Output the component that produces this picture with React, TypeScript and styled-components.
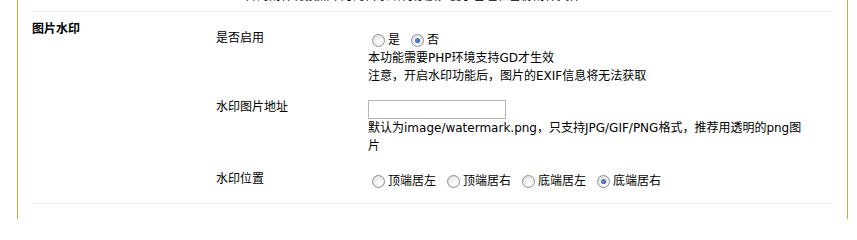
import React from "react";
import styled, { createGlobalStyle } from "styled-components";

const GlobalStyle = createGlobalStyle`
  html, body {
    margin: 0;
    padding: 0;
    background: #ffffff;
  }
  body {
    font-family: "DejaVu Sans", "Noto Sans CJK SC", sans-serif;
    font-size: 12px;
    color: #000000;
  }
`;

const Panel = styled.div`
  margin-left: 17px;
  width: 831px;
  box-sizing: border-box;
  min-height: 219px;
  border-left: 1px solid #e39c3c;
  border-right: 1px solid #e39c3c;
  padding: 0 14px;
  overflow: hidden;
`;

const PrevTail = styled.div`
  height: 2px;
  overflow: hidden;
  display: flex;
  align-items: flex-end;
  padding-left: 201px;
  margin-bottom: 9px;
  line-height: 12px;
  white-space: nowrap;
  color: #000;
`;

const Section = styled.div`
  display: grid;
  grid-template-columns: 184px 1fr;
  border-top: 1px solid #eeeeee;
  border-bottom: 1px solid #eeeeee;
  padding: 10px 0 5px;
`;

const SectionTitle = styled.div`
  font-weight: bold;
  line-height: 14px;
`;

const Fields = styled.div`
  display: flex;
  flex-direction: column;
`;

const FieldRow = styled.div`
  display: grid;
  grid-template-columns: 152px 1fr;
  padding: 9px 0 8px;
  &:first-child {
    padding-bottom: 6px;
  }
`;

const FieldLabel = styled.div`
  line-height: 14px;
`;

const FieldValue = styled.div`
  line-height: 18px;
  width: 440px;
`;

const RadioGroup = styled.div`
  display: flex;
  align-items: center;
  height: 18px;
`;

const Option = styled.label`
  display: inline-flex;
  align-items: center;
  margin-right: 7px;
  white-space: nowrap;
`;

const Radio = styled.span<{ $checked?: boolean }>`
  position: relative;
  display: inline-block;
  width: 13px;
  height: 13px;
  box-sizing: border-box;
  margin: 0 3px 0 4px;
  border-radius: 50%;
  border: 1px solid #8c9097;
  background: radial-gradient(circle at 60% 65%, #ffffff 0%, #f1f1f1 45%, #d4d4d4 100%);
  &::after {
    content: "";
    display: ${(p) => (p.$checked ? "block" : "none")};
    position: absolute;
    left: 3px;
    top: 3px;
    width: 5px;
    height: 5px;
    border-radius: 50%;
    background: radial-gradient(circle at 40% 40%, #6f93d8 0%, #2f58ad 70%, #24478f 100%);
  }
`;

const TextInput = styled.input`
  display: block;
  width: 138px;
  height: 19px;
  box-sizing: border-box;
  margin: 0;
  padding: 1px 3px;
  border: 1px solid #b5b5b5;
  background: #ffffff;
  font: inherit;
`;

const Line = styled.div``;

type Opt = { label: string; checked?: boolean };

const Radios: React.FC<{ options: Opt[] }> = ({ options }) => (
  <RadioGroup>
    {options.map((o) => (
      <Option key={o.label}>
        <Radio $checked={o.checked} />
        {o.label}
      </Option>
    ))}
  </RadioGroup>
);

export default function App() {
  return (
    <>
      <GlobalStyle />
      <Panel>
        <PrevTail>上传的附件将按照年月的目录结构存放，便于管理和备份附件文件</PrevTail>
        <Section>
          <SectionTitle>图片水印</SectionTitle>
          <Fields>
            <FieldRow>
              <FieldLabel>是否启用</FieldLabel>
              <FieldValue>
                <Radios options={[{ label: "是" }, { label: "否", checked: true }]} />
                <Line>本功能需要PHP环境支持GD才生效</Line>
                <Line>注意，开启水印功能后，图片的EXIF信息将无法获取</Line>
              </FieldValue>
            </FieldRow>
            <FieldRow>
              <FieldLabel>水印图片地址</FieldLabel>
              <FieldValue>
                <TextInput type="text" defaultValue="" />
                <Line>默认为image/watermark.png，只支持JPG/GIF/PNG格式，推荐用透明的png图片</Line>
              </FieldValue>
            </FieldRow>
            <FieldRow>
              <FieldLabel>水印位置</FieldLabel>
              <FieldValue>
                <Radios
                  options={[
                    { label: "顶端居左" },
                    { label: "顶端居右" },
                    { label: "底端居左" },
                    { label: "底端居右", checked: true },
                  ]}
                />
              </FieldValue>
            </FieldRow>
          </Fields>
        </Section>
      </Panel>
    </>
  );
}
